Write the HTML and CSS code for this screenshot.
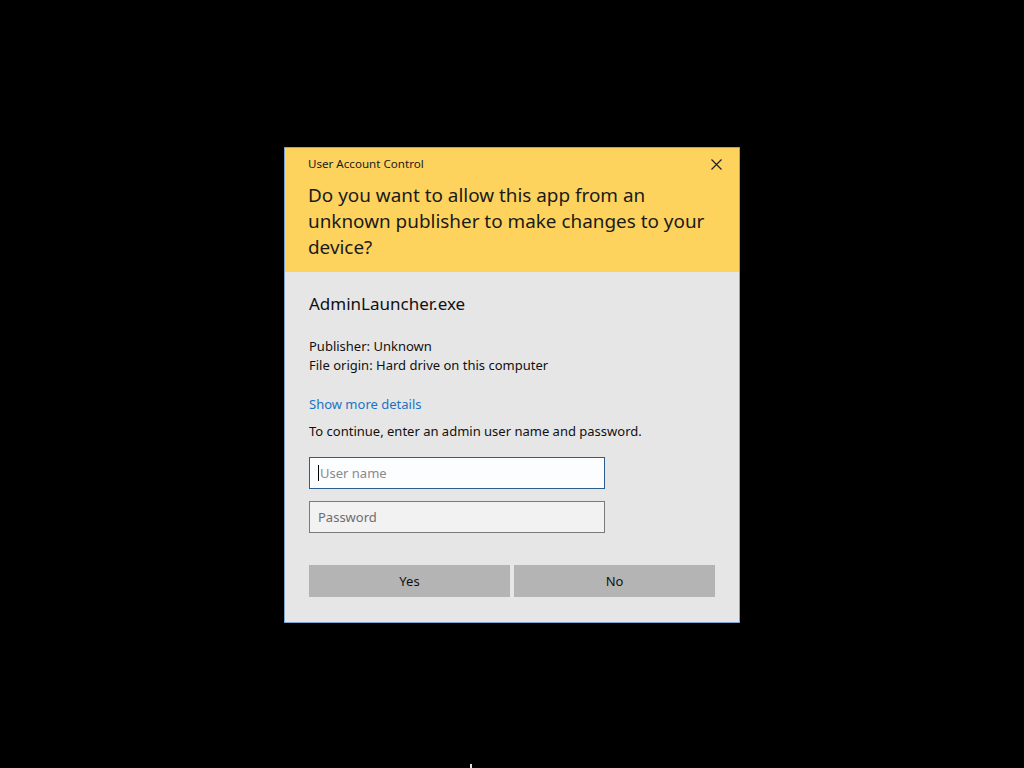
FILE: index.html
```html
<!DOCTYPE html>
<html lang="en">
<head>
<meta charset="utf-8">
<title>User Account Control</title>
<link rel="stylesheet" href="styles.css">
</head>
<body>

<div class="uac">
	<div class="uac-head">
		<div class="uac-titlebar">
			<span class="uac-title">User Account Control</span>
			<span class="uac-close">
				<svg width="11" height="11" viewBox="0 0 11 11"><path d="M0.5 0.5 L10.5 10.5 M10.5 0.5 L0.5 10.5" stroke="#222" stroke-width="1.2" fill="none"/></svg>
			</span>
		</div>
		<h1 class="uac-question">Do you want to allow this app from an unknown publisher to make changes to your device?</h1>
	</div>
	<div class="uac-body">
		<div class="app-name">AdminLauncher.exe</div>
		<p class="app-info">Publisher: Unknown<br />File origin: Hard drive on this computer</p>
		<a class="more-link" href="#">Show more details</a>
		<p class="prompt">To continue, enter an admin user name and password.</p>
		<div class="field field-focus"><span class="caret"></span>User name</div>
		<div class="field">Password</div>
		<div class="buttons">
			<div class="btn">Yes</div>
			<div class="btn">No</div>
		</div>
	</div>
</div>

<div class="pointer"></div>

</body>
</html>
```

FILE: styles.css
```css
html, body {
	margin: 0;
	background: #000;
	height: 100%;
}
body {
	font-family: "Noto Sans", "Open Sans", sans-serif;
	color: #111;
	position: relative;
	overflow: hidden;
}
.uac {
	width: 454px;
	margin: 147px auto 0;
	border: 1px solid #7fa6d0;
	background: #e6e6e6;
}
.uac-head {
	background: #fdd35e;
	padding: 8px 17px 11px 23px;
}
.uac-titlebar {
	display: flex;
	justify-content: space-between;
	align-items: center;
	height: 16px;
}
.uac-title {
	font-size: 11.6px;
	line-height: 16px;
	color: #1a1a1a;
}
.uac-close {
	display: flex;
}
.uac-question {
	margin: 10px 0 0;
	font-size: 18.9px;
	line-height: 26px;
	font-weight: normal;
	color: #1a1a1a;
	padding-bottom: 1px;
}
.uac-body {
	padding: 20px 24px 25px 24px;
}
.app-name {
	font-size: 17px;
	line-height: 24px;
}
.app-info {
	margin: 21px 0 0;
	font-size: 13px;
	line-height: 19px;
}
.more-link {
	display: block;
	margin-top: 20px;
	font-size: 13px;
	line-height: 19px;
	color: #1a74c4;
	text-decoration: none;
}
.prompt {
	margin: 8px 0 0;
	font-size: 13px;
	line-height: 19px;
}
.field {
	box-sizing: border-box;
	width: 296px;
	height: 32px;
	margin-top: 12px;
	padding: 0 8px;
	border: 1px solid #7a7a7a;
	background: #f2f2f2;
	color: #6d6d6d;
	font-size: 13px;
	line-height: 30px;
	display: flex;
	align-items: center;
}
.field-focus {
	margin-top: 16px;
	border-color: #2c5d8f;
	background: #fbfdff;
	color: #8a8a8a;
}
.caret {
	display: inline-block;
	width: 1px;
	height: 16px;
	background: #000;
	margin-right: 1px;
}
.buttons {
	display: flex;
	gap: 4px;
	margin-top: 32px;
}
.btn {
	flex: 1;
	height: 32px;
	background: #b4b4b4;
	font-size: 13px;
	line-height: 32px;
	text-align: center;
	color: #111;
}
.pointer {
	position: absolute;
	left: 470px;
	top: 764px;
	width: 2px;
	height: 4px;
	background: #ddd;
}
```
